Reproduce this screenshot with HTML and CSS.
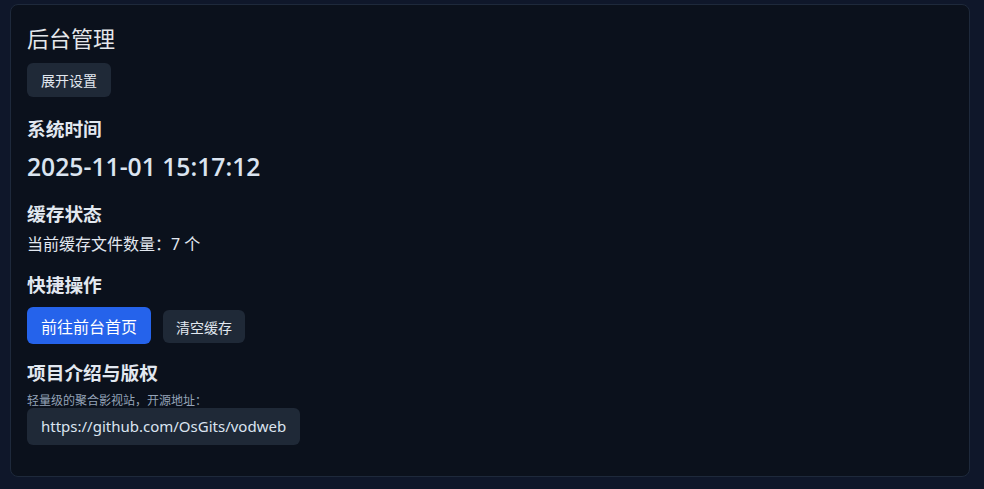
FILE: index.html
```html
<!DOCTYPE html>
<html lang="zh-CN">
<head>
<meta charset="utf-8">
<title>后台管理</title>
<link rel="stylesheet" href="styles.css">
</head>
<body>
<div class="card">
  <h1 class="title">后台管理</h1>
  <button class="btn btn-gray btn-sm">展开设置</button>
  <h2 class="section">系统时间</h2>
  <div class="clock">2025-11-01 15:17:12</div>
  <h2 class="section sp">缓存状态</h2>
  <p class="text">当前缓存文件数量：7 个</p>
  <h2 class="section sp">快捷操作</h2>
  <div class="actions">
    <button class="btn btn-blue">前往前台首页</button>
    <button class="btn btn-gray btn-sm">清空缓存</button>
  </div>
  <h2 class="section sp2">项目介绍与版权</h2>
  <p class="muted">轻量级的聚合影视站，开源地址：</p>
  <div class="link">https://github.com/OsGits/vodweb</div>
</div>
</body>
</html>
```
FILE: styles.css
```css
html, body {
  margin: 0;
  background: #0f172a;
}
body {
  padding: 4px 14px 0 10px;
  font-family: "Noto Sans", "Noto Sans CJK SC", sans-serif;
  color: #e2e8f0;
}
.card {
  background: #0b111c;
  border: 1px solid #1e293b;
  border-radius: 8px;
  padding: 16px 16px 31px 16px;
  display: flex;
  flex-direction: column;
  align-items: flex-start;
}
.title {
  margin: 0;
  font-size: 22px;
  font-weight: 400;
  line-height: 32px;
  color: #e5e7eb;
  font-family: "Noto Sans CJK SC", sans-serif;
}
.btn {
  border: none;
  border-radius: 6px;
  font-family: "Noto Sans CJK SC", sans-serif;
  cursor: pointer;
}
.btn-sm {
  height: 34px;
  padding: 0 14px;
  font-size: 14px;
}
.btn-gray {
  background: #1f2937;
  color: #e2e8f0;
}
.card > .btn-sm {
  margin-top: 10px;
}
.btn-blue {
  background: #2563eb;
  color: #ffffff;
  height: 37px;
  padding: 0 14px;
  font-size: 16px;
}
.section {
  margin: 17px 0 0;
  font-size: 18.72px;
  font-weight: 700;
  line-height: 28px;
  color: #e2e8f0;
  font-family: "Noto Sans CJK SC", sans-serif;
}
.section.sp { margin-top: 14px; }
.section.sp2 { margin-top: 14px; }
.clock {
  margin-top: 7px;
  font-family: "Open Sans", "Noto Sans", sans-serif;
  font-size: 24.7px;
  font-weight: 600;
  line-height: 36px;
  color: #dbe4f0;
}
.text {
  margin: 5px 0 0;
  font-size: 16px;
  line-height: 24px;
  color: #e2e8f0;
  font-family: "Noto Sans", "Noto Sans CJK SC", sans-serif;
}
.actions {
  margin-top: 9px;
  display: flex;
  align-items: center;
  gap: 12px;
}
.actions .btn-sm { height: 33px; margin-top: 2px; padding: 0 13px; }
.muted {
  margin: 6px 0 0;
  font-size: 12px;
  line-height: 16px;
  color: #94a3b8;
  font-family: "Noto Sans CJK SC", sans-serif;
}
.link {
  background: #1f2937;
  border-radius: 6px;
  height: 37px;
  line-height: 37px;
  padding: 0 14px;
  font-size: 15px;
  color: #dbe4f0;
  font-family: "Noto Sans", sans-serif;
}
```
